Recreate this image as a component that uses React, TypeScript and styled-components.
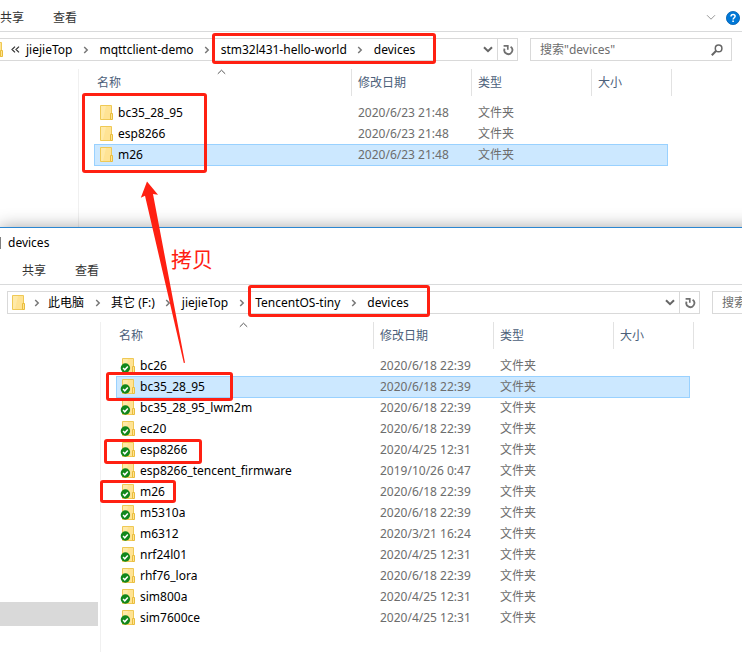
import React from "react";
import styled, { createGlobalStyle } from "styled-components";

const GlobalStyle = createGlobalStyle`
  * { box-sizing: border-box; }
  body { margin: 0; background: #fff; overflow: hidden; }
  body, button, input {
    font-family: "Noto Sans", "Noto Sans CJK SC", sans-serif;
    font-size: 12px;
    line-height: 16px;
    color: #000;
  }
  button { border: 0; padding: 0; background: none; }
`;

const Desktop = styled.main`
  position: relative;
  min-height: 100vh;
  overflow: hidden;
  display: flex;
  flex-direction: column;
`;

const BackWindow = styled.section`
  margin-left: -22px;
  display: flex;
  flex-direction: column;
`;

const FrontWindow = styled.section`
  position: relative;
  flex: 1;
  margin-right: -182px;
  display: flex;
  flex-direction: column;
  background: #fff;
  border-top: 1px solid #2a86d1;
  box-shadow: 0 0 16px rgba(0, 0, 0, 0.36);
`;

const TitleBar = styled.header`
  display: flex;
  align-items: center;
  height: 29px;
  gap: 7px;
`;

const TitleDivider = styled.span`
  width: 1px;
  height: 12px;
  background: #808080;
`;

const Title = styled.h1`
  margin: 0;
  font-size: 12px;
  font-weight: 400;
`;

const Ribbon = styled.nav<{ $topGap: number }>`
  display: flex;
  align-items: center;
  height: ${(p) => 28 + p.$topGap}px;
  padding: ${(p) => p.$topGap}px 2px 0 22px;
  border-bottom: 1px solid #d9dadb;
`;

const Tab = styled.button`
  margin-right: 29px;
  color: #333;
`;

const RibbonTools = styled.div`
  display: flex;
  align-items: center;
  gap: 10px;
  margin-left: auto;
`;

const IconButton = styled.button`
  display: flex;
  align-items: center;
  justify-content: center;
`;

const Toolbar = styled.div`
  display: flex;
  gap: 12px;
  padding: 6px 10px 8px 7px;
`;

const AddressBar = styled.div`
  flex: 1;
  min-width: 0;
  display: flex;
  align-items: stretch;
  height: 23px;
  padding-left: 2px;
  border: 1px solid #d9d9d9;
`;

const Crumbs = styled.div`
  flex: 1;
  display: flex;
  align-items: center;
`;

const Crumb = styled.button`
  white-space: nowrap;
`;

const Separator = styled.span<{ $narrow?: boolean }>`
  display: flex;
  justify-content: center;
  width: ${(p) => (p.$narrow ? 22 : 27)}px;
`;

const DropButton = styled(IconButton)`
  width: 18px;
`;

const RefreshButton = styled(IconButton)`
  width: 20px;
  border-left: 1px solid #d9d9d9;
`;

const SearchBox = styled.label`
  display: flex;
  align-items: center;
  width: 202px;
  height: 23px;
  padding: 0 8px 0 9px;
  border: 1px solid #d9d9d9;
`;

const SearchInput = styled.input`
  flex: 1;
  min-width: 0;
  padding: 0;
  border: 0;
  outline: 0;
  background: none;
  &::placeholder { color: #6d6d6d; opacity: 1; }
`;

const Content = styled.div<{ $bottomGap: number }>`
  flex: 1;
  display: flex;
  & > table { margin-bottom: ${(p) => p.$bottomGap}px; }
`;

const NavPane = styled.aside`
  width: 101px;
  flex: none;
  border-right: 1px solid #f0f0f0;
`;

const NavItem = styled.div`
  height: 24px;
  margin: 280px 2px 0 0;
  background: #d9d9d9;
`;

const FileTable = styled.table`
  display: block;
  margin-left: 15px;
  align-self: flex-start;
`;

const Head = styled.thead`
  display: block;
`;

const Body = styled.tbody`
  display: block;
  padding-top: 6px;
`;

const HeadRow = styled.tr`
  display: grid;
  grid-template-columns: 258px 120px 120px 80px;
  height: 27px;
`;

const HeadCell = styled.th`
  position: relative;
  display: flex;
  align-items: center;
  padding: 0 0 0 6px;
  border-right: 1px solid #e2e2e2;
  color: #4c607a;
  font-weight: 400;
  &:first-child { padding-left: 3px; }
`;

const SortMark = styled.span`
  position: absolute;
  top: 0;
  left: 0;
  right: 2px;
  display: flex;
  justify-content: center;
`;

const Row = styled.tr<{ $selected: boolean }>`
  display: grid;
  grid-template-columns: 257px 120px 120px 75px;
  height: 22px;
  margin: 0 4px -1px 0;
  border: 1px solid ${(p) => (p.$selected ? "#99d1ff" : "transparent")};
  background: ${(p) => (p.$selected ? "#cce8ff" : "transparent")};
`;

const Cell = styled.td`
  display: flex;
  align-items: center;
  padding: 0 0 0 6px;
  color: #6d6d6d;
  white-space: nowrap;
`;

const NameCell = styled(Cell)`
  gap: 4px;
  padding-left: 3px;
  color: #000;
`;

const Mark = styled.div<{ $x: number; $y: number; $w: number; $h: number }>`
  position: absolute;
  left: ${(p) => p.$x}px;
  top: ${(p) => p.$y}px;
  width: ${(p) => p.$w}px;
  height: ${(p) => p.$h}px;
  border: 3px solid #ff2012;
  border-radius: 3px;
  pointer-events: none;
`;

const Arrow = styled.svg`
  position: absolute;
  left: 140px;
  top: 180px;
  pointer-events: none;
`;

const Note = styled.span`
  position: absolute;
  left: 171px;
  top: 246px;
  font-size: 21px;
  line-height: 26px;
  color: #ff2012;
`;

const FolderIcon = ({ synced = false }: { synced?: boolean }) => (
  <svg width="16" height="18" viewBox="0 0 16 18" aria-hidden="true">
    <path d="M2.5 1.5h11v14h-11z" fill="#ffe394" stroke="#efc955" />
    <path d="M3 2h5L5 15H3z" fill="#ffeaa8" />
    <path d="M12.5 9.5h2v6h-2z" fill="#ffe394" stroke="#e9bd3c" />
    {synced && (
      <>
        <circle cx="5.4" cy="11" r="4.7" fill="#12871b" />
        <path d="M3.1 11l1.7 1.8 3-3.2" fill="none" stroke="#fff" strokeWidth="1.5" />
      </>
    )}
  </svg>
);

const ChevronRight = () => (
  <svg width="6" height="8" viewBox="0 0 6 8" aria-hidden="true">
    <path d="M1.2 1l3 3-3 3" fill="none" stroke="#777" strokeWidth="1.5" />
  </svg>
);

const ChevronDown = ({ color, weight }: { color: string; weight: number }) => (
  <svg width="10" height="7" viewBox="0 0 10 7" aria-hidden="true">
    <path d="M1 1.2l4 4 4-4" fill="none" stroke={color} strokeWidth={weight} />
  </svg>
);

const DoubleLeft = () => (
  <svg width="9" height="7" viewBox="0 0 9 7" aria-hidden="true">
    <path d="M4 .6L1 3.5l3 2.9M8 .6L5 3.5l3 2.9" fill="none" stroke="#333" strokeWidth="1.2" />
  </svg>
);

const RefreshIcon = () => (
  <svg width="12" height="12" viewBox="0 0 12 12" aria-hidden="true">
    <path d="M8.6 2.8A4 4 0 1 1 2.6 4.6" fill="none" stroke="#707070" strokeWidth="1.8" />
    <path d="M1.6 1.8h4.2v4" fill="none" stroke="#707070" strokeWidth="1.7" />
  </svg>
);

const SearchIcon = () => (
  <svg width="12" height="12" viewBox="0 0 12 12" aria-hidden="true">
    <circle cx="7.6" cy="4.4" r="3.3" fill="none" stroke="#666" strokeWidth="1.5" />
    <path d="M5.2 6.8L.8 11.2" stroke="#666" strokeWidth="2" />
  </svg>
);

const HelpIcon = () => (
  <svg width="14" height="14" viewBox="0 0 14 14" aria-hidden="true">
    <circle cx="7" cy="7" r="6.6" fill="#0078d7" stroke="#0060b0" strokeWidth=".8" />
    <path d="M5 5.4C5 2.8 9.1 2.9 9.1 5.3 9.1 6.8 7.1 6.8 7.1 8.6" fill="none" stroke="#fff" strokeWidth="1.5" />
    <path d="M6.3 9.6h1.6v1.5H6.3z" fill="#fff" />
  </svg>
);

interface FileEntry {
  name: string;
  date: string;
  selected?: boolean;
}

const copiedFiles: FileEntry[] = [
  { name: "bc35_28_95", date: "2020/6/23 21:48" },
  { name: "esp8266", date: "2020/6/23 21:48" },
  { name: "m26", date: "2020/6/23 21:48", selected: true },
];

const sourceFiles: FileEntry[] = [
  { name: "bc26", date: "2020/6/18 22:39" },
  { name: "bc35_28_95", date: "2020/6/18 22:39", selected: true },
  { name: "bc35_28_95_lwm2m", date: "2020/6/18 22:39" },
  { name: "ec20", date: "2020/6/18 22:39" },
  { name: "esp8266", date: "2020/4/25 12:31" },
  { name: "esp8266_tencent_firmware", date: "2019/10/26 0:47" },
  { name: "m26", date: "2020/6/18 22:39" },
  { name: "m5310a", date: "2020/6/18 22:39" },
  { name: "m6312", date: "2020/3/21 16:24" },
  { name: "nrf24l01", date: "2020/4/25 12:31" },
  { name: "rhf76_lora", date: "2020/6/18 22:39" },
  { name: "sim800a", date: "2020/4/25 12:31" },
  { name: "sim7600ce", date: "2020/4/25 12:31" },
];

function Files({ files, synced }: { files: FileEntry[]; synced?: boolean }) {
  return (
    <FileTable>
      <Head>
        <HeadRow>
          <HeadCell>
            名称
            <SortMark>
              <svg width="9" height="6" viewBox="0 0 9 6" aria-hidden="true">
                <path d="M.8 4.8l3.7-3.6 3.7 3.6" fill="none" stroke="#555" />
              </svg>
            </SortMark>
          </HeadCell>
          <HeadCell>修改日期</HeadCell>
          <HeadCell>类型</HeadCell>
          <HeadCell>大小</HeadCell>
        </HeadRow>
      </Head>
      <Body>
        {files.map((file) => (
          <Row key={file.name} $selected={!!file.selected}>
            <NameCell>
              <FolderIcon synced={synced} />
              {file.name}
            </NameCell>
            <Cell>{file.date}</Cell>
            <Cell>文件夹</Cell>
            <Cell />
          </Row>
        ))}
      </Body>
    </FileTable>
  );
}

function Location({ path, collapsed }: { path: string[]; collapsed?: boolean }) {
  return (
    <Toolbar>
      <AddressBar>
        <Crumbs>
          <FolderIcon />
          {path.map((part, i) => (
            <React.Fragment key={part}>
              <Separator $narrow={i === 0}>
                {collapsed && i === 0 ? <DoubleLeft /> : <ChevronRight />}
              </Separator>
              <Crumb>{part}</Crumb>
            </React.Fragment>
          ))}
        </Crumbs>
        <DropButton aria-label="历史记录">
          <ChevronDown color="#666" weight={2} />
        </DropButton>
        <RefreshButton aria-label="刷新">
          <RefreshIcon />
        </RefreshButton>
      </AddressBar>
      <SearchBox>
        <SearchInput type="text" aria-label="搜索" placeholder={'搜索"devices"'} />
        <SearchIcon />
      </SearchBox>
    </Toolbar>
  );
}

export default function App() {
  return (
    <Desktop>
      <GlobalStyle />
      <BackWindow>
        <Ribbon $topGap={4}>
          <Tab>共享</Tab>
          <Tab>查看</Tab>
          <RibbonTools>
            <IconButton aria-label="展开功能区">
              <ChevronDown color="#999" weight={1} />
            </IconButton>
            <IconButton aria-label="帮助">
              <HelpIcon />
            </IconButton>
          </RibbonTools>
        </Ribbon>
        <Location
          collapsed
          path={["jiejieTop", "mqttclient-demo", "stm32l431-hello-world", "devices"]}
        />
        <Content $bottomGap={62}>
          <NavPane />
          <Files files={copiedFiles} />
        </Content>
      </BackWindow>
      <FrontWindow>
        <TitleBar>
          <TitleDivider />
          <Title>devices</Title>
        </TitleBar>
        <Ribbon $topGap={0}>
          <Tab>共享</Tab>
          <Tab>查看</Tab>
        </Ribbon>
        <Location path={["此电脑", "其它 (F:)", "jiejieTop", "TencentOS-tiny", "devices"]} />
        <Content $bottomGap={0}>
          <NavPane>
            <NavItem />
          </NavPane>
          <Files files={sourceFiles} synced />
        </Content>
      </FrontWindow>
      <Mark $x={212} $y={33} $w={224} $h={31} />
      <Mark $x={82} $y={93} $w={125} $h={80} />
      <Mark $x={248} $y={285} $w={182} $h={32} />
      <Mark $x={106} $y={372} $w={127} $h={29} />
      <Mark $x={104} $y={439} $w={98} $h={25} />
      <Mark $x={100} $y={480} $w={76} $h={23} />
      <Arrow width="46" height="184" viewBox="0 0 46 184" aria-hidden="true">
        <path d="M7 1.5L.8 17.8 5 15.8 43.8 183 45 182.8 13 14 18 14.8z" fill="#ff2012" />
      </Arrow>
      <Note>拷贝</Note>
    </Desktop>
  );
}
